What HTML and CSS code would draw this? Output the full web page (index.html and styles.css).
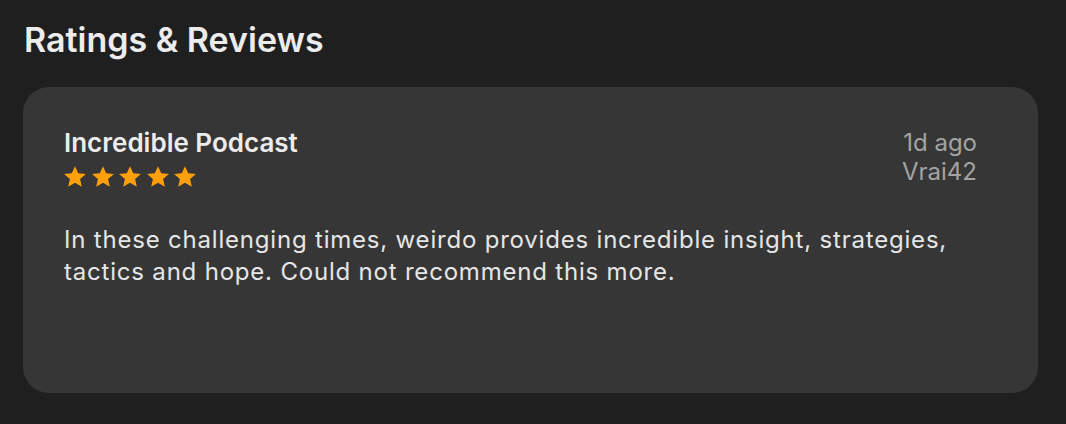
FILE: index.html
```html
<!DOCTYPE html>
<html lang="en">
<head>
<meta charset="utf-8">
<link rel="stylesheet" href="styles.css">
</head>
<body>
<section class="reviews">
  <h2 class="heading">Ratings &amp; Reviews</h2>
  <article class="card">
    <header class="card-head">
      <div class="card-left">
        <h3 class="title">Incredible Podcast</h3>
        <div class="stars">
          <svg viewBox="0 0 24 24" class="star"><path d="M12 1.2l3.2 7.1 7.7.7-5.8 5.1 1.7 7.6L12 17.8l-6.8 3.9 1.7-7.6L1.1 9l7.7-.7z"/></svg>
          <svg viewBox="0 0 24 24" class="star"><path d="M12 1.2l3.2 7.1 7.7.7-5.8 5.1 1.7 7.6L12 17.8l-6.8 3.9 1.7-7.6L1.1 9l7.7-.7z"/></svg>
          <svg viewBox="0 0 24 24" class="star"><path d="M12 1.2l3.2 7.1 7.7.7-5.8 5.1 1.7 7.6L12 17.8l-6.8 3.9 1.7-7.6L1.1 9l7.7-.7z"/></svg>
          <svg viewBox="0 0 24 24" class="star"><path d="M12 1.2l3.2 7.1 7.7.7-5.8 5.1 1.7 7.6L12 17.8l-6.8 3.9 1.7-7.6L1.1 9l7.7-.7z"/></svg>
          <svg viewBox="0 0 24 24" class="star"><path d="M12 1.2l3.2 7.1 7.7.7-5.8 5.1 1.7 7.6L12 17.8l-6.8 3.9 1.7-7.6L1.1 9l7.7-.7z"/></svg>
        </div>
      </div>
      <div class="meta">
        <span>1d ago</span>
        <span>Vrai42</span>
      </div>
    </header>
    <p class="body">In these challenging times, weirdo provides incredible insight, strategies, tactics and hope. Could not recommend this more.</p>
  </article>
</section>
</body>
</html>
```
FILE: styles.css
```css
html, body {
  margin: 0;
  padding: 0;
  background: #1f1f1f;
}
body {
  font-family: Inter, "Noto Sans", sans-serif;
  color: #ececec;
  width: 1066px;
  height: 424px;
  overflow: hidden;
}
.reviews {
  padding: 20px 28px 0 23px;
}
.heading {
  margin: 0 0 0 1px;
  font-size: 34px;
  line-height: 40px;
  font-weight: 600;
  letter-spacing: 0;
  color: #ececec;
}
.card {
  margin-top: 27px;
  height: 306px;
  box-sizing: border-box;
  background: #363636;
  border-radius: 26px;
  padding: 41px 61px 0 41px;
}
.card-head {
  display: flex;
  justify-content: space-between;
  align-items: flex-start;
}
.title {
  margin: 0;
  font-size: 26px;
  line-height: 30px;
  font-weight: 600;
  color: #ececec;
}
.stars {
  display: flex;
  gap: 3.5px;
  margin-top: 7px;
  margin-left: -1px;
}
.star {
  width: 24px;
  height: 24px;
  fill: #ff9f0a;
}
.meta {
  display: flex;
  flex-direction: column;
  align-items: flex-end;
  font-size: 24px;
  line-height: 29px;
  color: #a3a3a3;
}
.body {
  margin: 35px 0 0;
  font-size: 24px;
  line-height: 32px;
  letter-spacing: 0.8px;
  color: #e6e6e6;
}
```
